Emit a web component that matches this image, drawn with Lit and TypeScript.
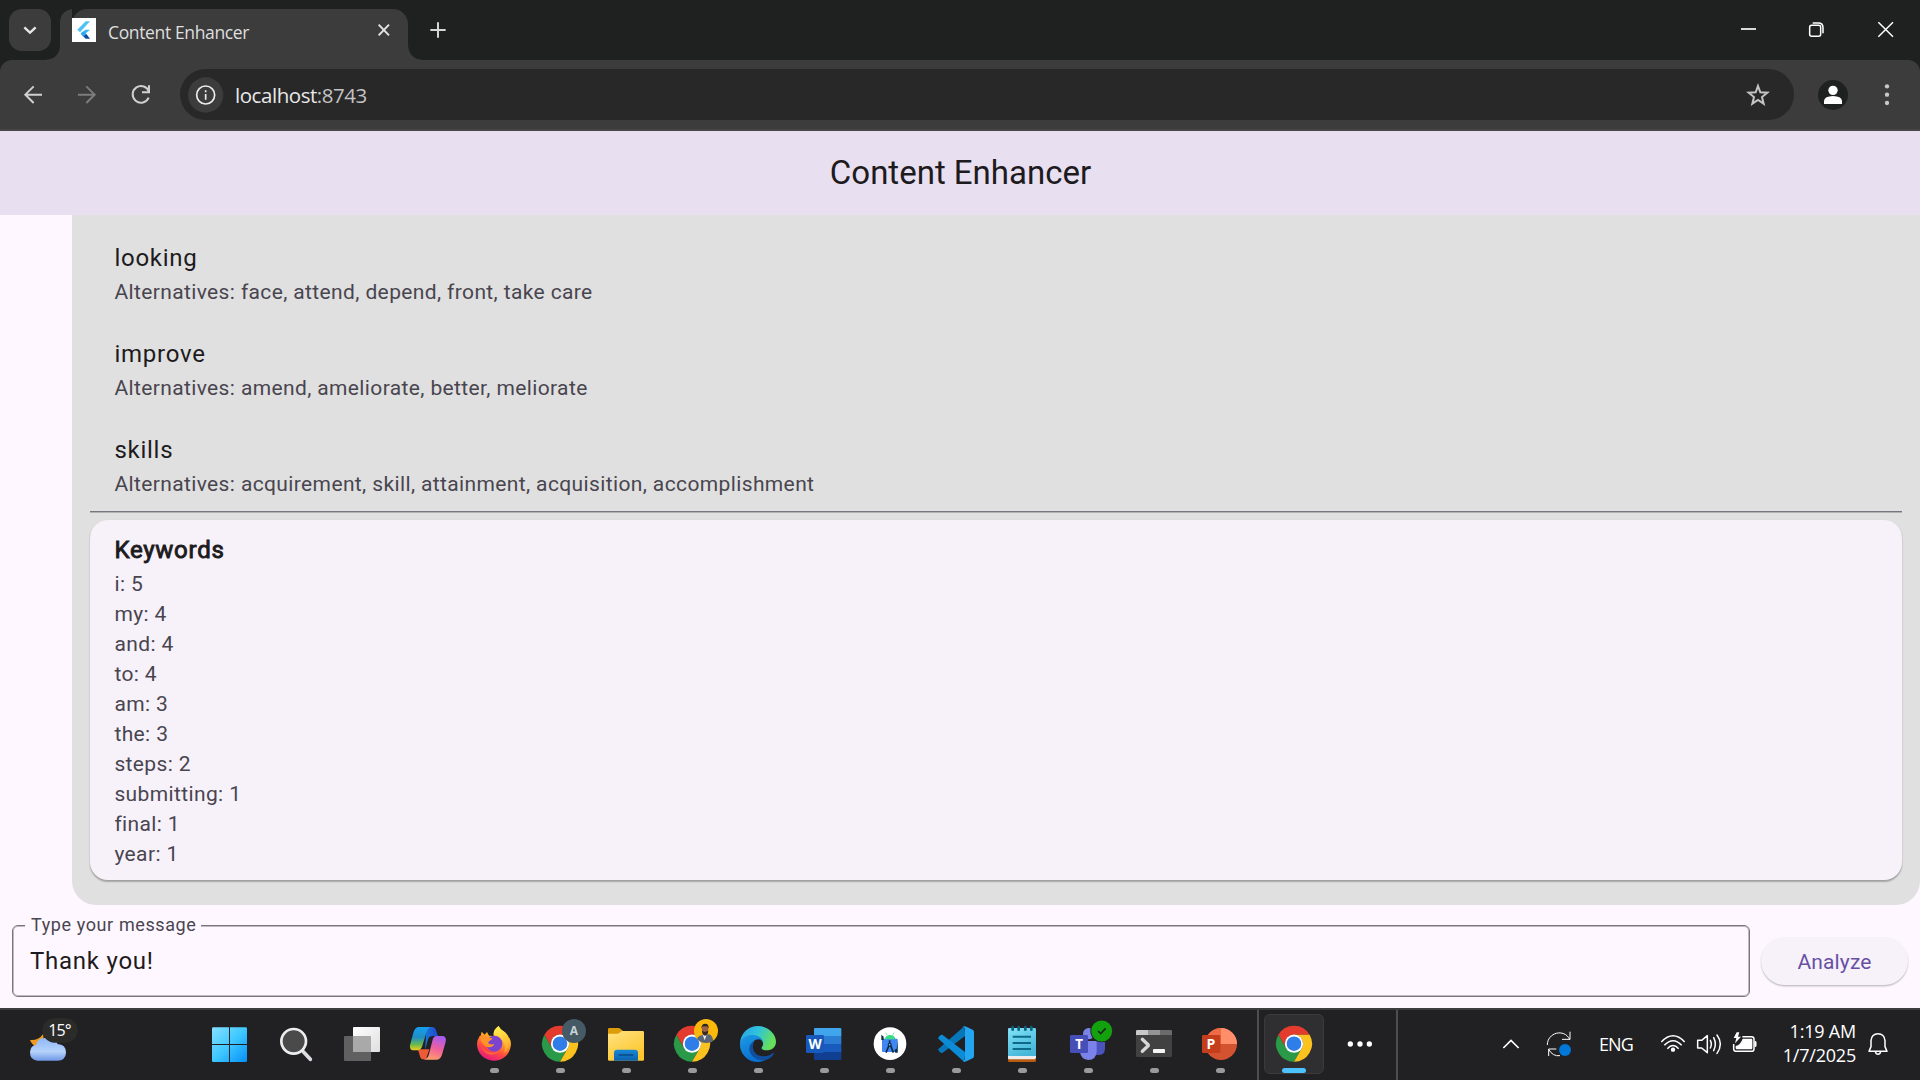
import { LitElement, html, svg, css } from "lit";
import { customElement } from "lit/decorators.js";

const chromeLogo = (cx: number, cy: number) => svg`
  <g transform="translate(${cx - 54} ${cy - 54}) scale(2.25)">
    <path fill="#2a9a48" d="M3.2 12A24 24 0 0 0 24 48L34.4 30 24 24 13.6 30Z"/>
    <path fill="#e33b2e" d="M3.2 12A24 24 0 0 1 44.8 12H24A12 12 0 0 0 13.6 30Z"/>
    <path fill="#fcc31e" d="M44.8 12A24 24 0 0 1 24 48L34.4 30A12 12 0 0 0 24 12Z"/>
    <circle cx="24" cy="24" r="12.2" fill="#fff"/>
    <circle cx="24" cy="24" r="9.7" fill="#2f7de9"/>
  </g>`;

/* Each taskbar icon is drawn at three units to the pixel; x is the left edge of its slot. */
const apps = [
  { x: 591, run: false, art: svg`
    <defs><linearGradient id="win" gradientUnits="userSpaceOnUse" x1="636" y1="82" x2="740" y2="186"><stop offset="0" stop-color="#86e0ff"/><stop offset=".5" stop-color="#3fc8ff"/><stop offset="1" stop-color="#0690f8"/></linearGradient></defs>
    <path fill="url(#win)" d="M640 82H687V132H636V86Q636 82 640 82ZM690 82H737Q741 82 741 86V132H690ZM636 135H687V186H640Q636 186 636 182ZM690 135H741V182Q741 186 737 186H690Z"/>` },
  { x: 789, run: false, art: svg`
    <path d="M910 155L931 178" stroke="#dcdfe1" stroke-width="11" stroke-linecap="round"/>
    <circle cx="881" cy="124" r="37" fill="#4a4a4b" stroke="#eceeee" stroke-width="8"/>` },
  { x: 987, run: false, art: svg`
    <defs><linearGradient id="tv" x2="1" y2="1"><stop offset="0" stop-color="#fff"/><stop offset="1" stop-color="#dedede"/></linearGradient></defs>
    <rect x="1032" y="108" width="81" height="75" rx="3" fill="#606060"/>
    <rect x="1059" y="81" width="81" height="75" rx="3" fill="url(#tv)"/>
    <path d="M1059 108H1110Q1113 108 1113 111V156H1062Q1059 156 1059 153Z" fill="#a9a9a9"/>` },
  { x: 15, run: false, art: svg`
    <defs>
      <linearGradient id="cpa" x1="0" y1="0" x2="0" y2="1"><stop offset="0" stop-color="#169ff0"/><stop offset=".45" stop-color="#1f8fc4"/><stop offset=".75" stop-color="#68b94f"/><stop offset="1" stop-color="#f4cf1c"/></linearGradient>
      <linearGradient id="cpb" x1=".6" y1="0" x2=".3" y2="1"><stop offset="0" stop-color="#a75cf0"/><stop offset=".5" stop-color="#f0609c"/><stop offset="1" stop-color="#ff9f66"/></linearGradient>
      <linearGradient id="cpc" x2="1"><stop offset="0" stop-color="#1778d8"/><stop offset="1" stop-color="#2148d0"/></linearGradient>
    </defs>
    <path fill="url(#cpc)" d="M110 81H128Q136 82 139 94L144 108H128Q118 108 114 118L105 150Z"/>
    <path fill="#ee5a35" d="M84 148H118L108 178H98Q92 178 89 166Z"/>
    <path fill="url(#cpa)" d="M87 81H122Q113 84 110 96L96 140Q92 151 80 151H70Q58 151 60 136L70 98Q75 81 87 81Z"/>
    <path fill="url(#cpb)" d="M139 108H155Q171 108 167 125L156 164Q151 179 139 179H100Q112 178 116 166L127 123Q130 108 139 108Z"/>` },
  { x: 213, run: true, art: svg`
    <defs>
      <linearGradient id="ff" x1=".75" y1="0" x2=".3" y2="1"><stop offset="0" stop-color="#fff04a"/><stop offset=".4" stop-color="#ffa52a"/><stop offset=".7" stop-color="#ff4a42"/><stop offset="1" stop-color="#e31587"/></linearGradient>
      <linearGradient id="ffy" x1=".5" y1="0" x2=".7" y2="1"><stop offset="0" stop-color="#fff04f"/><stop offset="1" stop-color="#ff9e25"/></linearGradient>
    </defs>
    <path fill="url(#ff)" d="M326 78C332 91 343 94 349 101C353 105 355 108 356 112C362 118 364 130 362 139C358 165 338 182 311 182C283 182 261 160 261 133C261 119 267 111 272 107L275 95L284 104L291 96L297 107L311 108C309 94 316 85 326 78Z"/>
    <path fill="url(#ffy)" d="M326 78C332 91 343 94 349 101C359 119 359 146 342 160C349 144 344 128 333 117C322 107 311 107 311 101C311 91 319 84 326 78Z"/>
    <circle cx="313" cy="131" r="24" fill="#7c43cf"/>
    <path fill="#ff9329" d="M268 108C279 105 286 109 292 112L307 115C304 123 294 123 295 129C296 134 308 134 313 132C308 145 288 145 280 132C274 125 270 118 268 108Z"/>
    <path d="M274 134C282 159 312 164 332 150C314 173 279 166 274 134Z" fill="#ff653b"/>` },
  { x: 411, run: true, art: svg`
    ${chromeLogo(510, 131)}
    <circle cx="552" cy="93" r="36" fill="#455a64"/>
    <text x="552" y="106" class="g" font-size="36" font-weight="700" fill="#c9d2d6" text-anchor="middle">A</text>` },
  { x: 609, run: true, art: svg`
    <defs><linearGradient id="fo" x2=".6" y2="1"><stop offset="0" stop-color="#ffe383"/><stop offset="1" stop-color="#fdc62c"/></linearGradient><linearGradient id="fob" x2="0" y2="1"><stop offset="0" stop-color="#1a88d6"/><stop offset="1" stop-color="#0b62b0"/></linearGradient></defs>
    <path d="M654 88Q654 84 658 84H684Q689 84 692 87L699 93V104H654Z" fill="#dd9d0b"/>
    <path d="M654 101H682Q686 101 689 98L694 94Q696 93 699 93H758Q762 93 762 97V179Q762 182 758 182H658Q654 182 654 179Z" fill="url(#fo)"/>
    <path d="M672 182V158Q672 149 681 149H735Q744 149 744 158V182Z" fill="url(#fob)"/>
    <path d="M688 165H728" stroke="#064a86" stroke-width="5" stroke-linecap="round"/>` },
  { x: 807, run: true, art: svg`
    ${chromeLogo(906, 131)}
    <defs><clipPath id="av"><circle cx="948" cy="93" r="36"/></clipPath></defs>
    <g clip-path="url(#av)">
      <rect x="910" y="55" width="76" height="76" fill="#fcb80a"/>
      <path d="M917 131Q918 110 936 105L958 103Q969 106 971 131Z" fill="#5b6578"/>
      <path d="M938 104L944 121 951 102Z" fill="#e9edf2"/>
      <path d="M935 84Q935 74 945 74Q956 74 955 88Q954 104 945 106Q936 104 935 84Z" fill="#9a6343"/>
      <path d="M934 85Q934 71 946 71Q957 71 956 86L952 79H938Z" fill="#2a2422"/>
      <path d="M936 92L944 96 955 92Q954 105 945 107Q937 105 936 92Z" fill="#3b2a24"/>
    </g>` },
  { x: 1005, run: true, art: svg`
    <defs>
      <linearGradient id="eg" x2="1" y2=".35"><stop offset="0" stop-color="#2a9fdf"/><stop offset=".5" stop-color="#2fc2df"/><stop offset="1" stop-color="#66e05b"/></linearGradient>
      <linearGradient id="eb" x2=".4" y2="1"><stop offset="0" stop-color="#1c9be5"/><stop offset="1" stop-color="#0a6fd0"/></linearGradient>
    </defs>
    <path fill="url(#eg)" d="M1050 130C1052 99 1075 78 1104 78C1136 78 1158 103 1158 125C1158 142 1144 151 1130 151C1117 151 1112 146 1116 141C1121 134 1120 127 1116 122C1102 104 1068 103 1050 130Z"/>
    <path fill="url(#eb)" d="M1050 130C1056 111 1074 104 1089 105C1107 106 1118 116 1120 127C1118 121 1112 118 1105 118C1091 118 1082 132 1086 149C1091 170 1110 181 1127 179C1118 184 1108 186 1100 186C1071 185 1048 159 1050 130Z"/>
    <path fill="#0f4f9d" d="M1093 124C1081 148 1096 169 1120 169C1135 169 1144 163 1149 159C1152 158 1153 161 1151 163C1144 173 1135 179 1127 180C1103 184 1078 168 1078 146C1078 135 1084 128 1093 124Z"/>` },
  { x: 33, run: true, art: svg`
    <path d="M102 86Q102 84 105 84H181Q184 84 184 87V108H102Z" fill="#41a5ee"/>
    <path d="M102 108H184V132H102Z" fill="#2b7cd3"/><path d="M102 132H184V156H102Z" fill="#185abd"/>
    <path d="M102 156H184V177Q184 180 181 180H105Q102 180 102 177Z" fill="#103f91"/>
    <rect x="78" y="105" width="54" height="54" rx="4" fill="#1859bc"/>
    <text x="105" y="147" class="g" font-size="41" font-weight="700" fill="#fff" text-anchor="middle">W</text>` },
  { x: 231, run: true, art: svg`
    <circle cx="330" cy="131" r="49" fill="#fff"/>
    <rect x="306" y="116" width="47" height="40" rx="3" fill="#4285f4"/>
    <path d="M304 104L311 110V120H304ZM353 120V158H346L343 150 350 146Z" fill="#083042"/>
    <path d="M314 118A17 17 0 0 1 347 118Z" fill="#3ddc84"/><path d="M317 98L321 105M342 98L338 105" stroke="#3ddc84" stroke-width="2"/>
    <path d="M329 121V132M328 134L318 158M331 134L340 158" stroke="#083042" stroke-width="5"/><circle cx="329" cy="134" r="6" fill="#083042"/><circle cx="329" cy="134" r="2.5" fill="#75b2ff"/>` },
  { x: 429, run: true, art: svg`
    <path d="M553 79L476 146Q473 149 476 152L482 158Q485 160 488 158L556 107Z" fill="#0877b9"/>
    <path d="M476 111L482 105Q485 103 488 105L556 157 553 186Q550 184 547 181L476 117Q473 114 476 111Z" fill="#0c8bd7"/>
    <path d="M553 186Q556 185 559 184L578 175Q582 173 582 168V96Q582 91 578 89L559 80Q552 76 547 82Q555 79 555 87V177Q555 184 549 182Q551 185 553 186Z" fill="#24a5ef"/>` },
  { x: 627, run: true, art: svg`
    <defs><linearGradient id="np" x2=".5" y2="1"><stop offset="0" stop-color="#82e2f8"/><stop offset="1" stop-color="#47b7d9"/></linearGradient></defs>
    <path d="M684 170H768V182Q768 186 764 186H688Q684 186 684 182Z" fill="#b85a12"/>
    <path d="M684 164H768V174L764 178H688Q684 178 684 174Z" fill="#ececec"/>
    <path d="M688 84H764Q768 84 768 88V168H684V88Q684 84 688 84Z" fill="url(#np)"/>
    <path d="M698 81V89M716 81V89M736 81V89M754 81V89" stroke="#0b627d" stroke-width="8" stroke-linecap="round"/>
    <path d="M698 110H753M698 129H753M698 147H753" stroke="#0c6a88" stroke-width="6"/>` },
  { x: 825, run: true, art: svg`
    <circle cx="960" cy="104" r="13" fill="#5059c9"/>
    <path d="M942 123H972Q975 123 975 127V146Q974 165 955 165H942Z" fill="#4b53bc"/>
    <circle cx="926" cy="101" r="17" fill="#7b83eb"/>
    <path d="M900 123H946Q950 123 950 128V155Q948 180 925 180Q903 179 900 156Z" fill="#7b83eb"/>
    <rect x="870" y="105" width="54" height="54" rx="4" fill="#464eb8"/>
    <text x="897" y="147" class="g" font-size="40" font-weight="700" fill="#fff" text-anchor="middle">T</text>
    <circle cx="965" cy="93" r="34" fill="#212324"/><circle cx="965" cy="93" r="31.5" fill="#13a10e"/>
    <path d="M954 93L962 101 977 85" fill="none" stroke="#1b2a1b" stroke-width="5"/>` },
  { x: 1023, run: true, art: svg`
    <path d="M1068 105H1176V167Q1176 171 1172 171H1072Q1068 171 1068 167Z" fill="#414141"/>
    <path d="M1072 90H1104V105H1068V94Q1068 90 1072 90Z" fill="#c8c8c8"/><path d="M1104 90H1140V105H1104Z" fill="#949494"/>
    <path d="M1140 90H1172Q1176 90 1176 94V105H1140Z" fill="#6b6b6b"/>
    <path d="M1087 118L1106 136 1087 154" fill="none" stroke="#d8d8d8" stroke-width="10" stroke-linejoin="bevel" stroke-linecap="round"/>
    <rect x="1119" y="147" width="36" height="12" rx="2" fill="#f5f5f5"/>` },
  { x: 51, run: true, art: svg`
    <circle cx="153" cy="132" r="48" fill="#d35230"/>
    <path d="M153 84V132H105A48 48 0 0 1 153 84Z" fill="#ed6c47"/><path d="M153 84A48 48 0 0 1 201 132H153Z" fill="#ff8f6b"/>
    <rect x="96" y="105" width="55" height="54" rx="4" fill="#c43e1c"/>
    <text x="123" y="147" class="g" font-size="42" font-weight="700" fill="#fff" text-anchor="middle">P</text>` },
];

@customElement("browser-frame")
class BrowserFrame extends LitElement {
  static styles = css`
    :host { display: block; background: #1f2120; font-family: "Open Sans", "Noto Sans", sans-serif; }
    .strip { display: flex; height: 60px; }
    .left { display: block; width: 72px; height: 60px; flex: none; }
    .tab { display: flex; align-items: center; box-sizing: border-box; width: 336px; height: 51px; margin-top: 9px; border-radius: 15px 15px 0 0; background: #3c3c3c; color: #dfdfdf; font-size: 17.5px; letter-spacing: -0.36px; }
    .tab span { flex: 1; padding-left: 12px; margin-top: -6px; }
    .tab .fav { display: block; margin-top: -9px; }
    .tab .x { display: block; margin: -9px 15px 0 0; }
    .plus { display: block; }
    .wins { display: block; margin-left: auto; }
    .bar { display: flex; align-items: center; box-sizing: border-box; height: 71px; background: #3c3c3c; border-radius: 12px 12px 0 0; border-bottom: 2px solid #474747; }
    .nav { display: block; }
    .omni { display: flex; align-items: center; width: 1614px; height: 51px; margin-top: 0; border-radius: 26px; background: #282828; color: #e8e8e8; font-size: 20.5px; letter-spacing: -0.45px; }
    .omni .info { display: block; margin-left: 8px; }
    .omni .url { flex: 1; padding-left: 11px; line-height: 30px; }
    .omni .port { color: #c3c3c3; }
    .omni .star { display: block; margin-right: 21px; }
    .end { display: block; }
  `;
  render() {
    return html`
      <div class="strip">
        <svg class="left" viewBox="0 0 216 180">
          <rect x="27" y="27" width="126" height="126" rx="38" fill="#3c3c3c"/>
          <path d="M73 82L90 98 107 82" fill="none" stroke="#e6e6e6" stroke-width="7"/>
          <path d="M134 180Q180 178 180 132V70Q180 27 225 27V180Z" fill="#3c3c3c"/>
        </svg>
        <div class="tab">
          <svg class="fav" width="24" height="24" viewBox="216 54 72 72">
            <rect x="216" y="54" width="72" height="72" fill="#fff"/>
            <path d="M257 64H270L240 97 232 89Z" fill="#4fc0f8"/><path d="M257 89H270L250 106 242 100Z" fill="#35b6f6"/>
            <path d="M242 101L250 94 259 102 250 110Z" fill="#29a9f0"/><path d="M250 109L259 102 270 116H257Z" fill="#0a4a9e"/>
          </svg>
          <span>Content Enhancer</span>
          <svg class="x" width="18" height="18" viewBox="1125 63 54 54"><path d="M1136 74L1167 106M1167 74L1136 106" stroke="#e3e3e3" stroke-width="6"/></svg>
        </div>
        <svg class="plus" width="60" height="60" viewBox="1224 0 180 180">
          <path d="M1224 130Q1224 178 1270 180H1224Z" fill="#3c3c3c"/>
          <path d="M1291 90H1337M1314 67V113" stroke="#d6d6d6" stroke-width="6"/>
        </svg>
        <svg class="wins" width="200" height="60" viewBox="360 0 600 180" fill="none" stroke="#fff">
          <path d="M423 87H468" stroke-width="5"/>
          <rect x="629" y="76" width="33" height="33" rx="6" stroke-width="4.5"/><path d="M638 69H655Q669 69 669 83V100" stroke-width="4.5"/>
          <path d="M835 67L879 110M879 67L835 110" stroke-width="4.5"/>
        </svg>
      </div>
      <div class="bar">
        <svg class="nav" width="180" height="69" viewBox="0 180 540 207" fill="none">
          <path d="M126 284H76M101 259L76 284 101 309" stroke="#d0d0d0" stroke-width="6"/>
          <path d="M234 284H284M259 259L284 284 259 309" stroke="#7c7c7c" stroke-width="6"/>
          <path d="M447 276A25 25 0 1 0 446 293" stroke="#d0d0d0" stroke-width="6"/><path d="M447 256V277H426" stroke="#d0d0d0" stroke-width="6"/>
        </svg>
        <div class="omni">
          <svg class="info" width="36" height="36" viewBox="563 230 108 108" fill="none">
            <circle cx="616" cy="284" r="53" fill="#3c3c3c"/><circle cx="616" cy="284" r="27" stroke="#ececec" stroke-width="5"/>
            <path d="M616 281V298M616 270V276" stroke="#ececec" stroke-width="5"/>
          </svg>
          <div class="url">localhost<span class="port">:8743</span></div>
          <svg class="star" width="30" height="30" viewBox="429 238 90 90"><path d="M474 256L481 275 502 276 486 289 491 309 474 298 457 309 462 289 446 276 467 275Z" fill="none" stroke="#c4c4c4" stroke-width="6"/></svg>
        </div>
        <svg class="end" width="126" height="69" viewBox="582 180 378 207">
          <circle cx="699" cy="285" r="45" fill="#1f2120"/><circle cx="699" cy="271" r="14" fill="#fff"/><path d="M672 312V302Q674 289 699 288 724 289 726 302V312Z" fill="#fff"/>
          <g fill="#c8c8c8"><circle cx="861" cy="259" r="6.5"/><circle cx="861" cy="284" r="6.5"/><circle cx="861" cy="309" r="6.5"/></g>
        </svg>
      </div>`;
  }
}

@customElement("content-enhancer")
class ContentEnhancer extends LitElement {
  private words = [
    ["looking", "face, attend, depend, front, take care"],
    ["improve", "amend, ameliorate, better, meliorate"],
    ["skills", "acquirement, skill, attainment, acquisition, accomplishment"],
  ];
  private keywords: [string, number][] = [
    ["i", 5], ["my", 4], ["and", 4], ["to", 4], ["am", 3], ["the", 3], ["steps", 2], ["submitting", 1], ["final", 1], ["year", 1],
  ];
  static styles = css`
    :host { display: flex; flex-direction: column; background: #fef7ff; font-family: Roboto, sans-serif; color: #1d1b20; }
    .appbar { display: flex; align-items: center; justify-content: center; flex: none; box-sizing: border-box; height: 84px; padding: 0 0 2px 1px; background: #e8dff0; font-size: 33px; }
    .bubble { box-sizing: border-box; height: 690px; margin-left: 72px; padding: 10px 18px 0; background: #e0e0e0; border-radius: 0 0 24px 24px; }
    .item { height: 66px; padding: 15px 24px 15px 24.4px; }
    .title { font-size: 24px; line-height: 36px; letter-spacing: 0.75px; }
    .sub { height: 30px; font-size: 21px; line-height: 32px; letter-spacing: 0.375px; color: #49454f; }
    .divider { height: 1px; margin-top: -2px; background: #79747e; border-bottom: 1px solid #b3b0b6; }
    .card { margin-top: 7px; padding: 12px 24px 12px 24.4px; background: #f7f2fa; border-radius: 18px; box-shadow: 0 1.5px 1.5px rgba(0, 0, 0, 0.24), 0 1px 2px rgba(0, 0, 0, 0.08); }
    .bold { -webkit-text-stroke: 0.9px #1d1b20; }
    .compose { display: flex; align-items: center; padding: 10px 11px 0 12px; }
    fieldset { box-sizing: border-box; width: 1738px; height: 82px; min-width: 0; margin: 0; padding: 8px 17px 0; border: 1px solid #79747e; border-radius: 6px; box-shadow: inset 0 0 0 1px #bfbac2; }
    legend { margin-left: -5px; padding: 0 5px 0 6px; background: #fef7ff; color: #49454f; font-size: 18px; line-height: 20px; letter-spacing: 0.6px; }
    .button { display: flex; align-items: center; justify-content: center; box-sizing: border-box; width: 147px; height: 48px; margin: 10px 0 0 11px; padding-top: 1px; border-radius: 24px; background: #f7f2fa; color: #6750a4; font-size: 21px; letter-spacing: 0.15px; box-shadow: 0 1.5px 1.5px rgba(0, 0, 0, 0.18), 0 1px 2px rgba(0, 0, 0, 0.07); }
  `;
  render() {
    return html`
      <div class="appbar">Content Enhancer</div>
      <div class="bubble">
        ${this.words.map(([w, alt]) => html`<div class="item"><div class="title">${w}</div><div class="sub">Alternatives: ${alt}</div></div>`)}
        <div class="divider"></div>
        <div class="card">
          <div class="title bold">Keywords</div>
          ${this.keywords.map(([k, n]) => html`<div class="sub">${k}: ${n}</div>`)}
        </div>
      </div>
      <div class="compose">
        <fieldset><legend>Type your message</legend><div class="title">Thank you!</div></fieldset>
        <div class="button">Analyze</div>
      </div>`;
  }
}

@customElement("task-bar")
class TaskBar extends LitElement {
  static styles = css`
    :host { display: flex; box-sizing: border-box; height: 72px; border-top: 2px solid #3d3d40; background: #212124; color: #fff; font-family: "Open Sans", "Noto Sans", sans-serif; }
    svg { display: block; flex: none; }
    .g { font-family: "Open Sans", sans-serif; }
    .weather { width: 197px; height: 70px; }
    .app { width: 66px; height: 70px; }
    .line { width: 2px; height: 70px; background: #4e4e51; }
    .first { margin-left: 4px; }
    .active { width: 137px; height: 70px; }
    .tray { width: 109px; height: 70px; margin-left: 92px; }
    .lang { width: 44px; line-height: 69px; font-size: 18px; letter-spacing: -0.9px; }
    .status { width: 110px; height: 70px; margin-left: 10px; }
    .clock { display: flex; flex-direction: column; width: 92px; padding-top: 9px; text-align: right; font-size: 18px; line-height: 24px; letter-spacing: -0.2px; white-space: nowrap; margin-left: 1px; }
    .bell { width: 40px; height: 70px; margin-left: 4px; }
  `;
  render() {
    return html`
      <svg class="weather" viewBox="0 30 591 210">
        <defs><linearGradient id="cl" x2="0" y2="1"><stop offset="0" stop-color="#8fb8f5"/><stop offset=".6" stop-color="#b5d2fb"/><stop offset="1" stop-color="#6f98e6"/></linearGradient></defs>
        <path d="M130 101Q134 134 110 140 96 136 90 120 116 122 130 101Z" fill="#f29a1f"/>
        <path d="M109 134Q112 113 136 114H152Q170 116 172 132Q198 133 198 158 197 181 172 182H112Q90 180 90 157 91 136 109 134Z" fill="url(#cl)"/>
        <rect x="127" y="54" width="106" height="74" rx="37" fill="#2b2b2a"/>
        <text x="145" y="108" class="g" font-size="48" letter-spacing="-2" textLength="68" fill="#fff">15°</text>
      </svg>
      ${apps.map((a) => html`<svg class="app" viewBox="${a.x} 30 198 210" fill="none">${a.art}
        ${a.run ? svg`<rect x=${a.x + 87} y="204" width="27" height="15" rx="7.5" fill="#9a9a9b"/>` : null}</svg>`)}
      <div class="line first"></div>
      <svg class="active" viewBox="267 30 411 210">
        <rect x="283.5" y="43.5" width="177" height="177" rx="16" fill="#2f2f32" stroke="#3b3b3e" stroke-width="3"/>
        ${chromeLogo(372, 131)}
        <rect x="336" y="204" width="72" height="15" rx="7.5" fill="#4cc2ff"/>
        <g fill="#fff"><circle cx="541" cy="132" r="8"/><circle cx="570" cy="132" r="8"/><circle cx="598" cy="132" r="8"/></g>
      </svg>
      <div class="line"></div>
      <svg class="tray" viewBox="30 30 327 210" fill="none" stroke="#fff">
        <path d="M70 144L93 121 116 144" stroke-width="5"/>
        <path d="M202 135C202 98 252 84 269 118M270 95V118H246M206 168V147H229M206 148Q218 170 240 167" stroke-width="3"/>
        <circle cx="255" cy="150" r="18" fill="#0078d7" stroke="none"/>
      </svg>
      <div class="lang">ENG</div>
      <svg class="status" viewBox="519 30 330 210" fill="none" stroke="#fff" stroke-width="4.5">
        <path d="M544 126Q579 89 614 126M553 136Q579 108 605 136M562 146Q579 127 596 146"/><circle cx="579" cy="149" r="6.5" fill="#fff" stroke="none"/>
        <path stroke-linejoin="round" d="M653 121H665L682 107V158L665 144H653Z"/><path stroke-linecap="round" d="M691 121Q697 132 691 144M701 113Q711 132 701 152M711 105Q731 132 711 160"/>
        <path d="M787 110H815Q822 110 822 117V147Q822 154 815 154H769Q761 154 761 147V132"/><path d="M788 116H814Q817 116 817 120V144Q817 148 814 148H771Q767 148 767 144V138Q782 134 788 116Z" fill="#fff" stroke="none"/>
        <path d="M825 125H828V139H825Z" fill="#fff" stroke-width="3"/><path d="M770 97L761 114H769L765 130L783 110H774L778 97Z" fill="#fff" stroke="none"/>
      </svg>
      <div class="clock"><span>1:19 AM</span><span>1/7/2025</span></div>
      <svg class="bell" viewBox="1140 30 120 210" fill="none" stroke="#fff" stroke-width="4.5">
        <path stroke-linejoin="round" d="M1167 154L1173 140V122Q1175 101 1194 101 1213 101 1215 122V140L1221 154Z"/><path d="M1186 155Q1188 163 1194 163 1200 163 1202 155"/>
      </svg>`;
  }
}

@customElement("app-root")
class AppRoot extends LitElement {
  static styles = css`
    :host { display: flex; flex-direction: column; width: 1920px; height: 1080px; overflow: hidden; }
    browser-frame { flex: none; height: 131px; }
    content-enhancer { flex: none; height: 877px; }
    task-bar { flex: none; }
  `;
  render() {
    return html`<browser-frame></browser-frame><content-enhancer></content-enhancer><task-bar></task-bar>`;
  }
}
